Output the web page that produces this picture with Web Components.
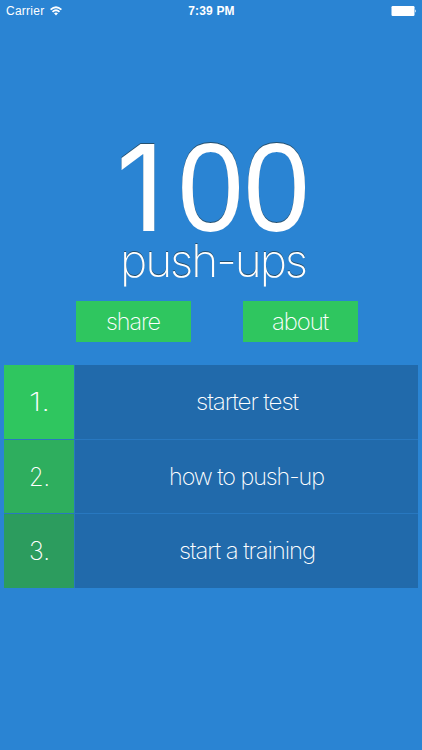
<!DOCTYPE html>
<html lang="en">
<head>
<meta charset="utf-8">
<title>100 push-ups</title>
<style>
  body {
    margin: 0;
    background: #2a84d3;
    color: #fff;
    font-family: Inter, "Liberation Sans", sans-serif;
  }
</style>
</head>
<body>
<push-app></push-app>
<script>
// single line of text stretched to a given width, centred in its own box
class FitLabel extends HTMLElement {
  connectedCallback() {
    const width = Number(this.getAttribute('width'))
    const size = Number(this.getAttribute('size'))
    const weight = this.getAttribute('weight') || 200
    const spacing = this.getAttribute('spacing') || '-.045em'
    const text = this.textContent
    this.attachShadow({ mode: 'open' }).innerHTML = `
      <style>
        :host { display: block; width: ${width}px; height: ${size}px; }
        svg { display: block; overflow: visible; }
        text { font-size: ${size}px; font-weight: ${weight}; letter-spacing: ${spacing}; fill: currentColor; }
      </style>
      <svg width="${width}" height="${size}">
        <text x="0" y="${size * 0.86}" textLength="${width}" lengthAdjust="spacingAndGlyphs">${text}</text>
      </svg>
    `
  }
}

class BigCount extends HTMLElement {
  constructor() {
    super()
    this.attachShadow({ mode: 'open' }).innerHTML = `
      <style>
        :host { display: block; height: 119px; }
        svg { display: block; overflow: visible; }
        text { font-size: 120px; fill: currentColor; }
        .zeros { font-family: "Liberation Sans", sans-serif; font-size: 126px; }
      </style>
      <svg width="197" height="119">
        <text y="102.5"><tspan x="1">1</tspan><tspan class="zeros" x="62.4" textLength="132.4" lengthAdjust="spacingAndGlyphs">00</tspan></text>
      </svg>
    `
  }
}

class StatusBar extends HTMLElement {
  constructor() {
    super()
    this.attachShadow({ mode: 'open' }).innerHTML = `
      <style>
        :host {
          display: grid;
          grid-template-columns: 1fr auto 1fr;
          align-items: center;
          height: 22px;
          padding: 0 5px 0 6px;
          font: 12px "Liberation Sans", sans-serif;
        }
        .carrier { display: flex; align-items: center; gap: 6px; letter-spacing: .25px; }
        .time { font-weight: bold; letter-spacing: .15px; }
        .battery { justify-self: end; }
        svg { display: block; }
      </style>
      <span class="carrier">Carrier
        <svg width="12" height="10" viewBox="0 0 12 10" fill="none" stroke="#fff" stroke-width="1.8">
          <path d="M.6 3.6Q6-1.2 11.4 3.6M2.5 5.8Q6 2.7 9.5 5.8"/>
          <path d="M4 7.3Q6 5.6 8 7.3L6 9.4Z" fill="#fff" stroke="none"/>
        </svg>
      </span>
      <span class="time">7:39 PM</span>
      <svg class="battery" width="26" height="10" viewBox="0 0 26 10" fill="#fff">
        <rect x=".5" width="23" height="10" rx="1.2"/>
        <path d="M24.2 3.3Q26 5 24.2 6.7Z"/>
      </svg>
    `
  }
}

class FlatButton extends HTMLElement {
  constructor() {
    super()
    this.attachShadow({ mode: 'open' }).innerHTML = `
      <style>
        :host {
          display: flex;
          justify-content: center;
          box-sizing: border-box;
          width: 115px;
          height: 41px;
          padding-top: 9px;
          background: #2fc65f;
        }
      </style>
      <slot></slot>
    `
  }
}

class MenuRow extends HTMLElement {
  constructor() {
    super()
    this.attachShadow({ mode: 'open' }).innerHTML = `
      <style>
        :host { display: grid; grid-template-columns: 70px 1fr; gap: 1px; }
        div { display: flex; justify-content: center; padding-top: 25px; }
        .number { background: var(--number-color); padding-top: 24px; }
        .label { background: #216aab; }
      </style>
      <div class="number"><slot name="number"></slot></div>
      <div class="label"><slot></slot></div>
    `
  }
}

class PushApp extends HTMLElement {
  constructor() {
    super()
    this.attachShadow({ mode: 'open' }).innerHTML = `
      <style>
        :host { display: block; height: 750px; overflow: hidden; }
        header { padding: 106px 0 0 115px; }
        big-count, .name { filter: drop-shadow(0 -1px .3px #25506f); }
        .name { margin: -9px 0 0 5px; }
        nav { display: flex; gap: 52px; margin: 18px 0 0 75.5px; }
        main {
          display: grid;
          grid-template-rows: 74px 73px 74px;
          gap: 1px;
          margin: 23px 4.4px 0;
          background: #2878c0;
        }
      </style>
      <status-bar></status-bar>
      <header>
        <big-count></big-count>
        <fit-label class="name" width="186" size="45" weight="150">push-ups</fit-label>
      </header>
      <nav>
        <flat-button><fit-label width="54" size="23.5">share</fit-label></flat-button>
        <flat-button><fit-label width="56" size="23.5">about</fit-label></flat-button>
      </nav>
      <main>
        <menu-row style="--number-color: #2fc65f">
          <fit-label slot="number" width="21" size="26" spacing="0">1.</fit-label>
          <fit-label width="102" size="23.5">starter test</fit-label>
        </menu-row>
        <menu-row style="--number-color: #2eae5e">
          <fit-label slot="number" width="21" size="26" spacing="0">2.</fit-label>
          <fit-label width="155" size="23.5">how to push-up</fit-label>
        </menu-row>
        <menu-row style="--number-color: #2c9c5e">
          <fit-label slot="number" width="21" size="26" spacing="0">3.</fit-label>
          <fit-label width="136" size="23.5">start a training</fit-label>
        </menu-row>
      </main>
    `
  }
}

customElements.define('fit-label', FitLabel)
customElements.define('big-count', BigCount)
customElements.define('status-bar', StatusBar)
customElements.define('flat-button', FlatButton)
customElements.define('menu-row', MenuRow)
customElements.define('push-app', PushApp)
</script>
</body>
</html>
